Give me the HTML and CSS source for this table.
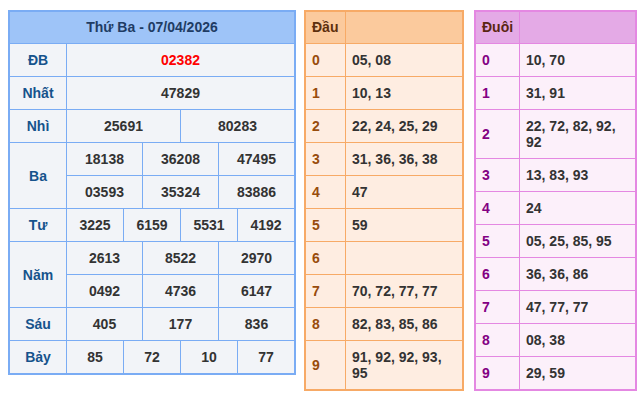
FILE: index.html
```html
<!DOCTYPE html>
<html lang="vi">
<head>
<meta charset="utf-8">
<title>Kết quả xổ số</title>
<link rel="stylesheet" href="styles.css">
</head>
<body>
<div class="wrap">
  <div class="kq">
    <div class="kq-head">Thứ Ba - 07/04/2026</div>
    <div class="lb">ĐB</div><div class="v s12 red">02382</div>
    <div class="lb">Nhất</div><div class="v s12">47829</div>
    <div class="lb">Nhì</div><div class="v s6">25691</div><div class="v s6">80283</div>
    <div class="lb r2">Ba</div><div class="v s4">18138</div><div class="v s4">36208</div><div class="v s4">47495</div>
    <div class="v s4">03593</div><div class="v s4">35324</div><div class="v s4">83886</div>
    <div class="lb">Tư</div><div class="v s3">3225</div><div class="v s3">6159</div><div class="v s3">5531</div><div class="v s3">4192</div>
    <div class="lb r2">Năm</div><div class="v s4">2613</div><div class="v s4">8522</div><div class="v s4">2970</div>
    <div class="v s4">0492</div><div class="v s4">4736</div><div class="v s4">6147</div>
    <div class="lb">Sáu</div><div class="v s4">405</div><div class="v s4">177</div><div class="v s4">836</div>
    <div class="lb">Bảy</div><div class="v s3">85</div><div class="v s3">72</div><div class="v s3">10</div><div class="v s3">77</div>
  </div>

  <div class="lt dau">
    <div class="h">Đầu</div><div class="h"></div>
    <div class="k">0</div><div class="t">05, 08</div>
    <div class="k">1</div><div class="t">10, 13</div>
    <div class="k">2</div><div class="t">22, 24, 25, 29</div>
    <div class="k">3</div><div class="t">31, 36, 36, 38</div>
    <div class="k">4</div><div class="t">47</div>
    <div class="k">5</div><div class="t">59</div>
    <div class="k">6</div><div class="t"></div>
    <div class="k">7</div><div class="t">70, 72, 77, 77</div>
    <div class="k">8</div><div class="t">82, 83, 85, 86</div>
    <div class="k">9</div><div class="t">91, 92, 92, 93, 95</div>
  </div>

  <div class="lt duoi">
    <div class="h">Đuôi</div><div class="h"></div>
    <div class="k">0</div><div class="t">10, 70</div>
    <div class="k">1</div><div class="t">31, 91</div>
    <div class="k">2</div><div class="t">22, 72, 82, 92, 92</div>
    <div class="k">3</div><div class="t">13, 83, 93</div>
    <div class="k">4</div><div class="t">24</div>
    <div class="k">5</div><div class="t">05, 25, 85, 95</div>
    <div class="k">6</div><div class="t">36, 36, 86</div>
    <div class="k">7</div><div class="t">47, 77, 77</div>
    <div class="k">8</div><div class="t">08, 38</div>
    <div class="k">9</div><div class="t">29, 59</div>
  </div>
</div>
</body>
</html>
```

FILE: styles.css
```css
html, body {
  margin: 0;
  padding: 0;
  background: #ffffff;
}
body {
  padding: 10px 8px 8px 8px;
  font-family: "Liberation Sans", Arial, sans-serif;
  font-size: 14px;
  font-weight: bold;
  color: #333333;
}
.wrap {
  display: flex;
  align-items: flex-start;
  gap: 8px;
}

/* Result table */
.kq {
  display: grid;
  grid-template-columns: 56px repeat(12, 18px);
  gap: 1px;
  background: #7aacf4;
  border: 2px solid #7aacf4;
  width: 284px;
}
.kq > div {
  background: #f2f4f8;
  display: flex;
  align-items: center;
  justify-content: center;
  padding: 8px 0;
  line-height: 16px;
}
.kq .kq-head {
  grid-column: 1 / -1;
  background: #9ec4f8;
  color: #1f3c64;
  padding: 7px 0 8px;
}
.kq .lb {
  color: #16538c;
}
.kq .r2 { grid-row: span 2; }
.kq .s12 { grid-column: span 12; }
.kq .s6 { grid-column: span 6; }
.kq .s4 { grid-column: span 4; }
.kq .s3 { grid-column: span 3; }
.kq .red { color: #ff0000; }

/* Loto tables */
.lt {
  display: grid;
  gap: 1px;
}
.lt > div {
  display: flex;
  align-items: center;
  padding: 8px 6px;
  line-height: 16px;
}
.lt .h {
  padding: 7px 6px 8px;
}
.dau {
  grid-template-columns: 39px 116px;
  background: #f7aa66;
  border: 2px solid #f7aa66;
  margin-left: 0;
}
.dau > div { background: #feede1; }
.dau .h { background: #fbca9d; color: #5e300e; }
.dau .k { color: #984c0c; }

.duoi {
  grid-template-columns: 43px 115px;
  background: #e488e2;
  border: 2px solid #e488e2;
  margin-left: 2px;
}
.duoi > div { background: #fcf0fa; }
.duoi .h { background: #e4aae6; color: #5a2612; }
.duoi .k { color: #830083; }
```
